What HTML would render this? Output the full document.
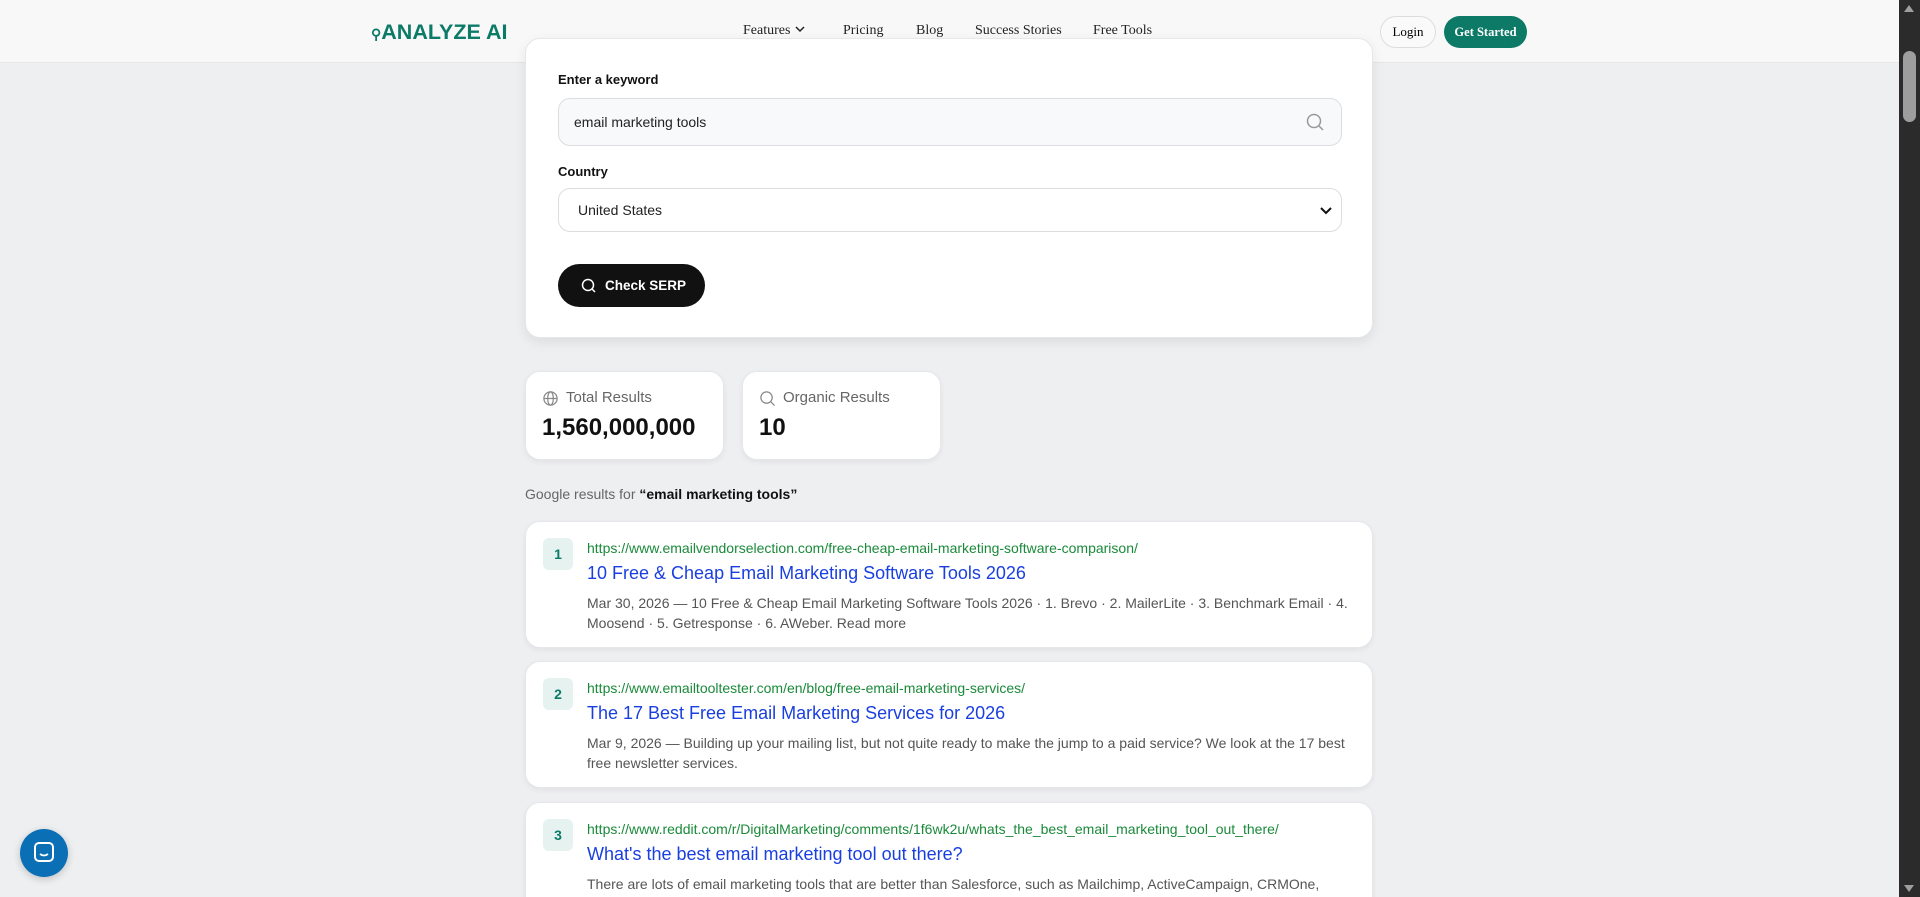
<!DOCTYPE html>
<html><head><meta charset="utf-8"><style>
*{box-sizing:border-box;margin:0;padding:0}
html,body{width:1920px;height:897px;overflow:hidden}
body{background:#eeeff1;font-family:"Liberation Sans",Arial,sans-serif;position:relative}
.nav{position:absolute;left:0;top:0;width:1899px;height:63px;background:#f8f8f8;border-bottom:1px solid #e6e6e6}
.logo{position:absolute;left:371px;top:20px;font-size:21.5px;font-weight:700;color:#0d7a68;letter-spacing:0}
.links{position:absolute;top:23px;font-family:"Liberation Serif",serif;font-size:14px;color:#222}
.links span{position:absolute;white-space:nowrap}
.login{position:absolute;left:1380px;top:16px;width:56px;height:32px;border:1px solid #ddd;border-radius:16px;font-family:"Liberation Serif",serif;font-size:13px;text-align:center;line-height:30px;background:#fafafa}
.gs{position:absolute;left:1444px;top:16px;width:83px;height:32px;background:#0d7a68;color:#fff;border-radius:16px;font-family:"Liberation Serif",serif;font-weight:700;font-size:12.5px;text-align:center;line-height:32px}
.card{position:absolute;background:#fff;border-radius:15px;box-shadow:0 2px 6px rgba(0,0,0,.06);border:1px solid #e6e7ea}
.lbl{position:absolute;left:32px;font-size:13px;font-weight:700;color:#111}
.inp{position:absolute;left:32px;width:784px;border:1px solid #dcdde0;border-radius:12px}
.stat .t{position:absolute;left:40px;top:17px;font-size:15px;color:#666}
.stat .v{position:absolute;left:16px;top:42px;font-size:24px;font-weight:700;color:#111}
.res{left:525px;width:848px;height:127px}
.num{position:absolute;left:17px;top:16px;width:30px;height:32px;background:#e6f2ef;border-radius:6px;color:#0d7a68;font-weight:700;font-size:14px;text-align:center;line-height:32px}
.url{position:absolute;left:61px;top:18px;font-size:14px;color:#1a8a3a;white-space:nowrap}
.ttl{position:absolute;left:61px;top:41px;font-size:18px;color:#1a3fe0;white-space:nowrap}
.desc{position:absolute;left:61px;top:71px;width:770px;font-size:14px;line-height:20px;color:#555}
</style></head><body>
<div class="nav">
<div class="logo"><span style="font-size:14px">&#9906;</span>ANALYZE AI</div>
<div class="links">
<span style="left:743px">Features <svg width="12" height="10" viewBox="0 0 12 10"><path d="M2 3l4 4 4-4" fill="none" stroke="#222" stroke-width="1.5"/></svg></span>
<span style="left:843px">Pricing</span><span style="left:916px">Blog</span><span style="left:975px">Success Stories</span><span style="left:1093px">Free Tools</span>
</div>
<div class="login">Login</div><div class="gs">Get Started</div>
</div>
<div class="card" style="left:525px;top:38px;width:848px;height:300px;box-shadow:0 4px 12px rgba(0,0,0,.08)">
<div class="lbl" style="top:33px">Enter a keyword</div>
<div class="inp" style="top:59px;height:48px;background:#f8f9fa"><span style="position:absolute;left:15px;top:15px;font-size:14px;color:#222">email marketing tools</span>
<svg style="position:absolute;right:16px;top:13px" width="20" height="20" viewBox="0 0 20 20"><circle cx="9" cy="9" r="6.5" fill="none" stroke="#999" stroke-width="1.5"/><path d="M14 14l4 4" stroke="#999" stroke-width="1.5"/></svg></div>
<div class="lbl" style="top:125px">Country</div>
<div class="inp" style="top:149px;height:44px;background:#fff"><span style="position:absolute;left:19px;top:13px;font-size:14px;color:#222">United States</span>
<svg style="position:absolute;right:8px;top:16px" width="14" height="12" viewBox="0 0 14 12"><path d="M2 3l5 5 5-5" fill="none" stroke="#111" stroke-width="2"/></svg></div>
<div style="position:absolute;left:32px;top:225px;width:147px;height:43px;background:#111;border-radius:22px;color:#fff;font-size:13.5px;font-weight:700;line-height:43px">
<svg style="position:absolute;left:23px;top:14px" width="16" height="16" viewBox="0 0 16 16"><circle cx="7" cy="7" r="5.5" fill="none" stroke="#fff" stroke-width="1.5"/><path d="M11 11l3 3" stroke="#fff" stroke-width="1.5"/></svg>
<span style="position:absolute;left:47px">Check SERP</span></div>
</div>
<div class="card stat" style="left:525px;top:371px;width:199px;height:89px"><svg style="position:absolute;left:16px;top:18px" width="17" height="17" viewBox="0 0 18 18"><g fill="none" stroke="#888" stroke-width="1.3"><circle cx="9" cy="9" r="7"/><ellipse cx="9" cy="9" rx="3" ry="7"/><path d="M2 9h14"/></g></svg><div class="t">Total Results</div><div class="v">1,560,000,000</div></div>
<div class="card stat" style="left:742px;top:371px;width:199px;height:89px"><svg style="position:absolute;left:16px;top:18px" width="17" height="17" viewBox="0 0 18 18"><circle cx="8" cy="8" r="6" fill="none" stroke="#888" stroke-width="1.3"/><path d="M12.5 12.5l4 4" stroke="#888" stroke-width="1.3"/></svg><div class="t">Organic Results</div><div class="v">10</div></div>
<div style="position:absolute;left:525px;top:486px;font-size:14px;color:#666">Google results for <b style="color:#111">“email marketing tools”</b></div>
<div class="card res" style="top:521px"><div class="num">1</div><div class="url">https://www.emailvendorselection.com/free-cheap-email-marketing-software-comparison/</div><div class="ttl">10 Free &amp; Cheap Email Marketing Software Tools 2026</div><div class="desc">Mar 30, 2026 — 10 Free &amp; Cheap Email Marketing Software Tools 2026 · 1. Brevo · 2. MailerLite · 3. Benchmark Email · 4. Moosend · 5. Getresponse · 6. AWeber. Read more</div></div>
<div class="card res" style="top:661px"><div class="num">2</div><div class="url">https://www.emailtooltester.com/en/blog/free-email-marketing-services/</div><div class="ttl">The 17 Best Free Email Marketing Services for 2026</div><div class="desc">Mar 9, 2026 — Building up your mailing list, but not quite ready to make the jump to a paid service? We look at the 17 best free newsletter services.</div></div>
<div class="card res" style="top:802px;height:140px"><div class="num">3</div><div class="url">https://www.reddit.com/r/DigitalMarketing/comments/1f6wk2u/whats_the_best_email_marketing_tool_out_there/</div><div class="ttl">What's the best email marketing tool out there?</div><div class="desc">There are lots of email marketing tools that are better than Salesforce, such as Mailchimp, ActiveCampaign, CRMOne, Tekmetric, HubSpot, Moosend. Read more</div></div>
<div style="position:absolute;left:20px;top:829px;width:48px;height:48px;border-radius:50%;background:#0a6fb5;box-shadow:0 2px 8px rgba(0,0,0,.2)"><svg style="position:absolute;left:14px;top:13px" width="20" height="22" viewBox="0 0 20 22"><rect x="1" y="1" width="18" height="18" rx="4" fill="none" stroke="#fff" stroke-width="2"/><path d="M6 12q4 3 8 0" fill="none" stroke="#fff" stroke-width="1.8"/></svg></div>
<div style="position:absolute;left:1899px;top:0;width:21px;height:897px;background:#2b2b2b"><div style="position:absolute;left:4px;top:51px;width:13px;height:71px;background:#9e9e9e;border-radius:7px"></div>
<div style="position:absolute;left:5px;top:5px;border:5px solid transparent;border-bottom:7px solid #9e9e9e;border-top:0;width:0"></div>
<div style="position:absolute;left:5px;bottom:5px;border:5px solid transparent;border-top:7px solid #9e9e9e;border-bottom:0;width:0"></div></div>
</body></html>
